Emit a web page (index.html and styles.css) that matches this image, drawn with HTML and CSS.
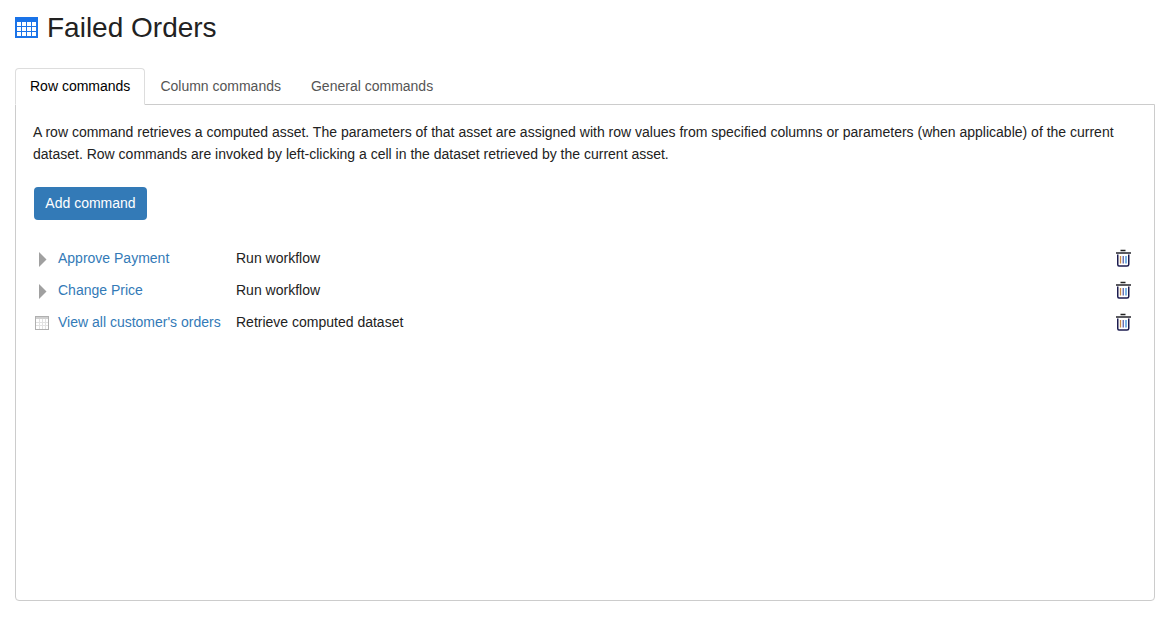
FILE: index.html
```html
<!doctype html>
<html>
<head>
  <meta charset="utf-8">
  <title>Failed Orders</title>
  <link rel="stylesheet" href="styles.css">
</head>
<body>
  <header class="page-title">
    <svg class="title-icon" width="23" height="21" viewBox="0 0 23 21">
      <rect width="23" height="21" fill="#1a73e8"/>
      <g fill="#fff">
        <rect x="2" y="5" width="4" height="4"/><rect x="7" y="5" width="4" height="4"/><rect x="12" y="5" width="4" height="4"/><rect x="17" y="5" width="4" height="4"/>
        <rect x="2" y="10" width="4" height="4"/><rect x="7" y="10" width="4" height="4"/><rect x="12" y="10" width="4" height="4"/><rect x="17" y="10" width="4" height="4"/>
        <rect x="2" y="15" width="4" height="4"/><rect x="7" y="15" width="4" height="4"/><rect x="12" y="15" width="4" height="4"/><rect x="17" y="15" width="4" height="4"/>
      </g>
    </svg>
    <h1>Failed Orders</h1>
  </header>

  <ul class="tabs">
    <li class="tab active">Row commands</li>
    <li class="tab">Column commands</li>
    <li class="tab">General commands</li>
  </ul>

  <section class="tab-panel">
    <p class="intro">A row command retrieves a computed asset. The parameters of that asset are assigned with row values from specified columns or parameters (when applicable) of the current dataset. Row commands are invoked by left-clicking a cell in the dataset retrieved by the current asset.</p>
    <button class="btn-add">Add command</button>

    <div class="commands">
      <div class="command">
        <svg class="cmd-icon" width="16" height="18" viewBox="0 0 16 18"><path d="M5 3 L12.500 10.500 L5 18 Z" fill="#a0a0a0"/></svg>
        <a class="cmd-name" href="#">Approve Payment</a>
        <span class="cmd-type">Run workflow</span>
        <svg class="trash" width="18" height="18" viewBox="0 0 18 18"><use href="#trash"/></svg>
      </div>
      <div class="command">
        <svg class="cmd-icon" width="16" height="18" viewBox="0 0 16 18"><path d="M5 3 L12.500 10.500 L5 18 Z" fill="#a0a0a0"/></svg>
        <a class="cmd-name" href="#">Change Price</a>
        <span class="cmd-type">Run workflow</span>
        <svg class="trash" width="18" height="18" viewBox="0 0 18 18"><use href="#trash"/></svg>
      </div>
      <div class="command">
        <svg class="cmd-icon" width="16" height="18" viewBox="0 0 16 18">
          <rect x="1.500" y="3.500" width="13" height="13" fill="#fff" stroke="#b0b0b0"/>
          <rect x="2" y="4" width="12" height="2" fill="#d0d0d0"/>
          <path d="M2 9.500H14M2 12.500H14M5.500 6V16M8.500 6V16M11.500 6V16" stroke="#e2e2e2" fill="none"/>
        </svg>
        <a class="cmd-name" href="#">View all customer's orders</a>
        <span class="cmd-type">Retrieve computed dataset</span>
        <svg class="trash" width="18" height="18" viewBox="0 0 18 18"><use href="#trash"/></svg>
      </div>
    </div>
  </section>

  <svg class="defs" width="0" height="0">
    <defs>
      <g id="trash">
        <path d="M6.500 1.500H11.500" stroke="#222" stroke-width="1.500" fill="none"/>
        <rect x="2" y="3" width="15" height="2" fill="#5a5a60"/>
        <path d="M3.750 5.500V15.500Q3.750 17 5 17H13Q14.750 17 14.750 15.500V5.500" stroke="#1c1c50" stroke-width="1.500" fill="none"/>
        <path d="M6.500 7V14.500" stroke="#c98a45" stroke-width="1.300"/>
        <path d="M9.250 7V14.500" stroke="#5a62ac" stroke-width="1.300"/>
        <path d="M12 7V14.500" stroke="#3a90d8" stroke-width="1.300"/>
      </g>
    </defs>
  </svg>
</body>
</html>
```

FILE: styles.css
```css
html, body {
  margin: 0;
  height: 100%;
}
body {
  padding: 0 19px 19px 15px;
  box-sizing: border-box;
  display: flex;
  flex-direction: column;
  font-family: "Liberation Sans", Arial, sans-serif;
  font-size: 14px;
  line-height: 20px;
  color: #222;
  background: #fff;
}
.page-title {
  display: flex;
  align-items: center;
  gap: 9px;
  height: 68px;
  padding-bottom: 13px;
  box-sizing: border-box;
}
.page-title h1 {
  margin: 0;
  font-size: 28px;
  font-weight: 400;
  line-height: 32px;
}
.tabs {
  display: flex;
  list-style: none;
  margin: 0 0 -1px;
  padding: 0;
  position: relative;
}
.tab {
  padding: 7px 14px 8px;
  height: 37px;
  box-sizing: border-box;
  border: 1px solid transparent;
  color: #555;
}
.tab.active {
  color: #000;
  background: #fff;
  border-color: #ddd #ddd #fff;
  border-radius: 4px 4px 0 0;
}
.tab-panel {
  flex: 1;
  border: 1px solid #ccc;
  border-radius: 0 0 4px 4px;
  padding: 16px 17px;
}
.intro {
  margin: 0 0 22px;
  font-size: 14px;
  line-height: 22px;
  color: #222;
}
.btn-add {
  display: block;
  width: 113px;
  height: 33px;
  margin-left: 1px;
  padding: 0 0 2px;
  border: 0;
  border-radius: 4px;
  background: #337ab7;
  color: #fff;
  font: inherit;
}
.commands {
  margin: 22px 0 0 1px;
}
.command {
  display: flex;
  align-items: center;
  height: 32px;
}
.cmd-icon {
  flex: none;
  margin-right: 8px;
}
.cmd-name {
  width: 178px;
  flex: none;
  color: #337ab7;
  text-decoration: none;
}
.cmd-type {
  flex: 1;
}
.trash {
  flex: none;
  margin-right: 5px;
}
.defs {
  position: absolute;
}
```
